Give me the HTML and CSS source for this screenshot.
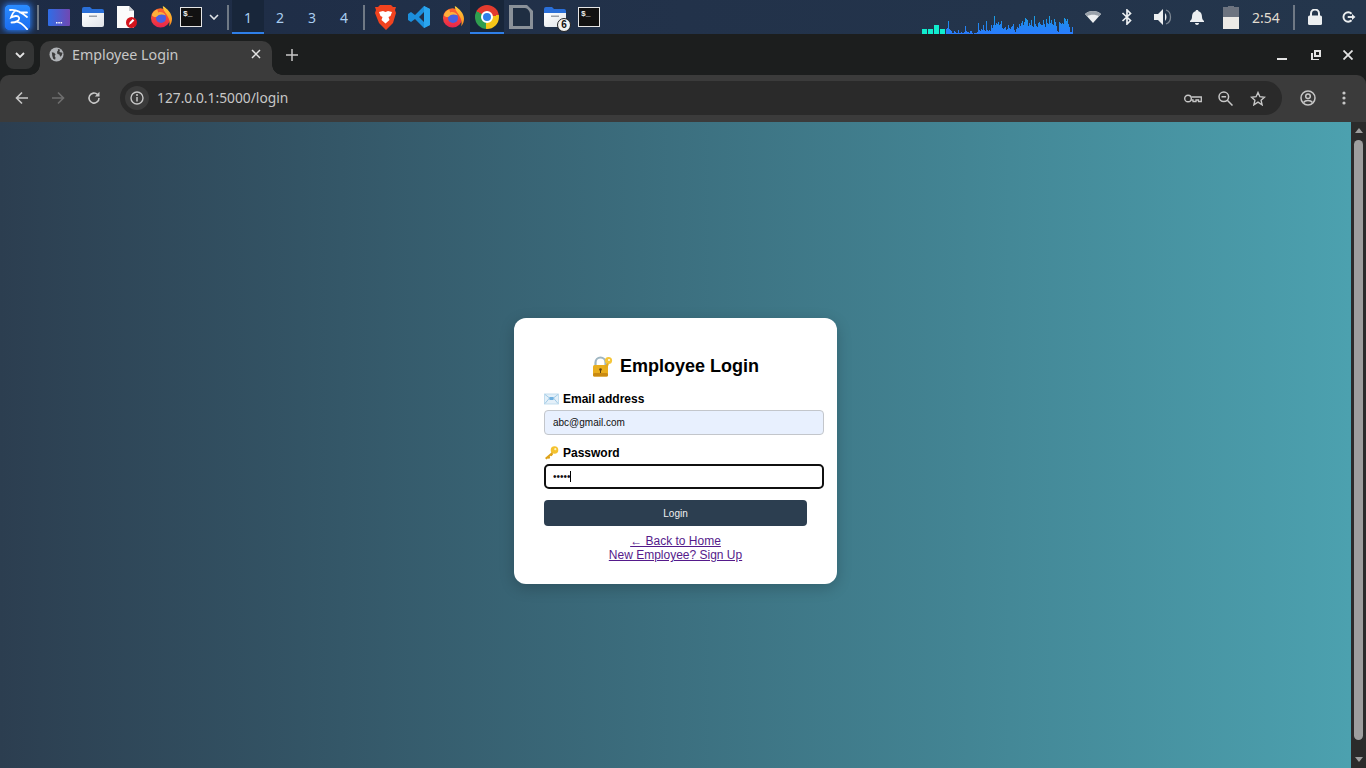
FILE: index.html
```html
<!DOCTYPE html>
<html lang="en">
<head>
<meta charset="utf-8">
<title>Employee Login</title>
<link rel="stylesheet" href="styles.css">
</head>
<body>
<svg class="defs" width="0" height="0" aria-hidden="true">
  <defs>
    <linearGradient id="ffBody" x1="0" y1="0" x2="0" y2="1"><stop offset="0" stop-color="#ff6a2a"/><stop offset="1" stop-color="#e8224e"/></linearGradient>
    <linearGradient id="ffFlame" x1="0" y1="0" x2="0" y2="1"><stop offset="0" stop-color="#ffcf3c"/><stop offset="1" stop-color="#ff8a1e"/></linearGradient>
    <linearGradient id="winGrad" x1="0" y1="0" x2="1" y2="0"><stop offset="0" stop-color="#2f6de6"/><stop offset="1" stop-color="#7148b2"/></linearGradient>
    <linearGradient id="folderGrad" x1="0" y1="0" x2="1" y2="1"><stop offset="0" stop-color="#fff"/><stop offset="1" stop-color="#dfe3e8"/></linearGradient>
    <linearGradient id="kaliGrad" x1="0" y1="0" x2="0" y2="1"><stop offset="0" stop-color="#2b8cff"/><stop offset="1" stop-color="#1a6cf0"/></linearGradient>
    <linearGradient id="barGrad" gradientUnits="userSpaceOnUse" x1="0" y1="0" x2="0" y2="20"><stop offset="0" stop-color="#1aa6dc"/><stop offset=".5" stop-color="#2088f0"/><stop offset="1" stop-color="#2a7cff"/></linearGradient>
    <symbol id="firefox" viewBox="0 0 24 24">
      <circle cx="11.5" cy="13" r="10.5" fill="url(#ffBody)"/>
      <path d="M14 0c5 3 10 8 10 14 0 3-1 6-3 8 1-4 0-8-2-11-1-3-5-6-5-11z" fill="url(#ffFlame)"/>
      <circle cx="12" cy="13" r="5.5" fill="#4a5fe0"/>
      <path d="M2 10c1-4 4-6 6-6l1 3c3-1 6 0 8 3-3-1-6-1-8 0-1 1-2 2-3 2-2 0-3-1-4-2z" fill="#ffb03a"/>
    </symbol>
    <symbol id="folder" viewBox="0 0 22 20">
      <path d="M0 2a2 2 0 0 1 2-2h6l2 2h10a2 2 0 0 1 2 2v4H0z" fill="#2a6fd8"/>
      <path d="M0 6h22v12a2 2 0 0 1-2 2H2a2 2 0 0 1-2-2z" fill="url(#folderGrad)"/>
      <rect x="7" y="8.500" width="8" height="1.500" fill="#9aa0a8"/>
    </symbol>
    <symbol id="globe" viewBox="0 0 16 16">
      <circle cx="8" cy="8" r="7.500" fill="#b0b3b7"/>
      <path d="M3 5.500l2.500.5 1.500 2-1 1.500 1 2-.5 2-2-1-1-3zM9.500 2l2.500 1-1 1.500 1 1 2.500.5-1 3-1.500 1.500-1-2.500-2-.5-.5-2.500 1-1z" fill="#3b3b3b"/>
    </symbol>
  </defs>
</svg>

<header class="taskbar">
  <div class="cell">
    <svg class="kali" width="25" height="25" viewBox="0 0 25 25"><rect width="25" height="25" rx="3" fill="url(#kaliGrad)"/><path d="M5 5c5-1 10 1 17 7M15 7.500h7M11 5.500c-3 1-4 4-5 7 3-1.500 7-2.500 8 0 1 3-3 5-7.500 5M11.700 16.700c4 .5 7 3.500 10.600 7.600" fill="none" stroke="#fff" stroke-width="1.800" stroke-linecap="round"/></svg>
  </div>
  <div class="sep"></div>
  <div class="cell">
    <svg width="22" height="17" viewBox="0 0 22 17"><rect width="22" height="17" rx="1" fill="url(#winGrad)"/><path d="M8 13h1.500v1.500H8zM10.300 13h1.500v1.500h-1.500zM12.600 13h1.500v1.500h-1.500z" fill="#fff"/></svg>
  </div>
  <div class="cell"><svg width="22" height="20"><use href="#folder"/></svg></div>
  <div class="cell">
    <svg width="24" height="24" viewBox="0 0 24 24"><path d="M2 1h12l5 5v17H2z" fill="#fbfbfb"/><path d="M14 1l5 5h-5z" fill="#c9ccd0"/><circle cx="16.500" cy="17.500" r="5.500" fill="#d3141c"/><path d="M13.800 20l1-3 3-3 1.500 1.500-3 3z" fill="#fff"/></svg>
  </div>
  <div class="cell"><svg width="22" height="22"><use href="#firefox"/></svg></div>
  <div class="cell cell-term"><div class="term">$_</div></div>
  <div class="cell cell-chev"><svg width="10" height="6" viewBox="0 0 10 6"><path d="M1 1l4 4 4-4" fill="none" stroke="#dfe3e8" stroke-width="1.600"/></svg></div>
  <div class="sep"></div>
  <nav class="workspaces">
    <span class="ws active">1</span><span class="ws">2</span><span class="ws">3</span><span class="ws">4</span>
  </nav>
  <div class="sep"></div>
  <div class="cell">
    <svg width="21" height="25" viewBox="0 0 21 25"><path d="M5 0h11l2 2 3 0-1 3 1 3-3 10-7 7-7-7L0 8l1-3-1-3 3 0z" fill="#f1431f"/><path d="M4 7l4-1 2.500 1L13 6l4 1-1.500 4-2 1 1 3-4 3.500L6.500 15l1-3-2-1z" fill="#fff"/></svg>
  </div>
  <div class="cell">
    <svg width="22" height="22" viewBox="0 0 22 22"><path d="M16 0l6 3v16l-6 3-9-9-4 3-3-2V8l3-2 4 3zM16 6l-5 5 5 5z" fill="#1c8fdc"/><path d="M16 0l6 3v16l-6 3V16 6z" fill="#2aa5ee"/></svg>
  </div>
  <div class="cell"><svg width="22" height="22"><use href="#firefox"/></svg></div>
  <div class="cell active"><div class="chrome"><div class="chrome-eye"></div></div></div>
  <div class="cell">
    <svg width="24" height="24" viewBox="0 0 24 24"><path d="M0 0h18l6 6v18H0z" fill="#8a9199"/><path d="M4 3h12c2 0 5 3 5 6v12H4z" fill="#1f2e42"/></svg>
  </div>
  <div class="cell cell-badge">
    <svg width="22" height="20"><use href="#folder"/></svg>
    <span class="badge">6</span>
  </div>
  <div class="cell"><div class="term">$_</div></div>

  <div class="tray">
    <div class="graph">
      <svg class="graph-core" width="24" height="10" viewBox="0 0 24 10"><path d="M0 5h5v5H0zM6 5h5v5H6zM12 1h5v9h-5zM18 5h5v5h-5z" fill="#11edce"/></svg>
      <svg width="128" height="20" viewBox="0 0 128 20"><path fill="none" stroke="url(#barGrad)" d="M.5 20v-5m1 5v-6m1 6v-13m1 13v-5m1 5v-4m1 4v-3m1 3v-1m1 1v-1m1 1v-3m1 3v-2m1 2v-1m1 1v-1m1 1v-4m1 4v-1m1 1v-1m1 1v-2m1 2v-1m1 1v-1m1 1v-2m1 2v-8m1 8v-3m1 3v-2m1 2v-2m1 2v-1m1 1v-3m1 3v-3m1 3v-1m2 1v-1m1 1v-1m1 1v-1m1 1v-2m1 2v-11m1 11v-4m1 4v-3m1 3v-5m1 5v-4m1 4v-9m1 9v-4m1 4v-3m1 3v-13m1 13v-4m1 4v-3m1 3v-4m1 4v-3m1 3v-9m1 9v-6m1 6v-9m1 9v-18m1 18v-9m1 9v-11m1 11v-10m1 10v-12m1 12v-9m1 9v-10m1 10v-13m1 13v-6m1 6v-5m1 5v-6m1 6v-7m1 7v-4m1 4v-5m1 5v-9m1 9v-6m1 6v-5m1 5v-7m1 7v-8m1 8v-10m1 10v-4m1 4v-2m1 2v-5m1 5v-7m1 7v-6m1 6v-10m1 10v-8m1 8v-11m1 11v-13m1 13v-9m1 9v-12m1 12v-16m1 16v-15m1 15v-14m1 14v-8m1 8v-11m1 11v-9m1 9v-14m1 14v-8m1 8v-7m1 7v-18m1 18v-10m1 10v-8m1 8v-7m1 7v-11m1 11v-12m1 12v-10m1 10v-9m1 9v-9m1 9v-14m1 14v-10m1 10v-7m1 7v-15m1 15v-11m1 11v-10m1 10v-18m1 18v-11m1 11v-14m1 14v-10m1 10v-9m1 9v-15m1 15v-12m1 12v-8m1 8v-3m1 3v-2m1 2v-12m1 12v-11m1 11v-10m1 10v-11m1 11v-10m1 10v-16m1 16v-15m1 15v-13m1 13v-15m1 15v-10m1 10v-7m1 7v-2m1 2v-2m1 2v-7"/></svg>
    </div>
    <div class="cell">
      <svg width="16" height="12" viewBox="0 0 16 12"><path d="M0 3c4-4 12-4 16 0l-8 9z" fill="#eceff1"/><path d="M0 3c4-4 12-4 16 0l-2 2.300c-3-2-9-2-12 0z" fill="#9aa2ab"/></svg>
    </div>
    <div class="cell">
      <svg width="12" height="16" viewBox="0 0 12 16"><path d="M1.500 4l8 7.500L6 15V1l3.500 3.500-8 7.500" fill="none" stroke="#eceff1" stroke-width="1.700"/></svg>
    </div>
    <div class="cell cell-vol">
      <svg width="18" height="16" viewBox="0 0 18 16"><path d="M0 5h4l5-5v16l-5-5H0z" fill="#eceff1"/><path d="M11 4c2 2 2 6 0 8v-8z" fill="#eceff1"/><path d="M12 1c6 2 6 12 0 14" fill="none" stroke="#7d8793" stroke-width="1.300"/></svg>
    </div>
    <div class="cell">
      <svg width="14" height="15" viewBox="0 0 14 15"><path d="M7 0c1 0 1.500.6 1.500 1.300C11 2 12 4 12 7c0 2 1 3 2 4v1H0v-1c1-1 2-2 2-4 0-3 1-5 3.500-5.700C5.500.6 6 0 7 0zM5 13h4c0 1-1 2-2 2s-2-1-2-2z" fill="#eceff1"/></svg>
    </div>
    <div class="cell cell-batt">
      <svg width="16" height="23" viewBox="0 0 16 23"><path d="M5 0h6v1H5z" fill="#6d7480"/><path d="M0 1h16v10H0z" fill="#6d7480"/><path d="M0 11h16v12H0z" fill="#eceae6"/></svg>
    </div>
    <time class="clock">2:54</time>
    <div class="sep"></div>
    <div class="cell">
      <svg width="14" height="16" viewBox="0 0 14 16"><path d="M3 7V4.500a4 4 0 0 1 8 0V7" fill="none" stroke="#eceff1" stroke-width="2"/><rect y="6.500" width="14" height="9.500" rx="1.500" fill="#eceff1"/></svg>
    </div>
    <div class="cell">
      <svg width="14" height="12" viewBox="0 0 15 14"><path d="M10.500 3.200A5.500 5.500 0 1 0 10.500 10.800" fill="none" stroke="#eceff1" stroke-width="2.200"/><path d="M6 7h6" stroke="#eceff1" stroke-width="2.200"/><path d="M11 3.500L15 7l-4 3.500z" fill="#eceff1"/></svg>
    </div>
  </div>
</header>

<div class="tabstrip">
  <button class="tab-menu"><svg width="10" height="6" viewBox="0 0 10 6"><path d="M1 1l4 4 4-4" fill="none" stroke="#e3e3e3" stroke-width="1.800"/></svg></button>
  <div class="tab">
    <svg class="favicon" width="15" height="15"><use href="#globe"/></svg>
    <span class="tab-title">Employee Login</span>
    <svg class="tab-close" width="10" height="10" viewBox="0 0 10 10"><path d="M1 1l8 8M9 1L1 9" stroke="#e3e3e3" stroke-width="1.500"/></svg>
  </div>
  <svg class="new-tab" width="12" height="12" viewBox="0 0 12 12"><path d="M6 0v12M0 6h12" stroke="#c7c7c7" stroke-width="1.500"/></svg>
  <div class="win-controls">
    <svg width="10" height="10" viewBox="0 0 10 10"><path d="M0 9h10" stroke="#e3e3e3" stroke-width="2"/></svg>
    <svg width="10" height="10" viewBox="0 0 10 10"><path fill-rule="evenodd" d="M3 0h7v7H3zM5 2v3h3V2zM0 3h2v6h6v1H0z" fill="#e3e3e3"/></svg>
    <svg width="10" height="10" viewBox="0 0 10 10"><path d="M.5.500l9 9M9.500.500l-9 9" stroke="#e3e3e3" stroke-width="1.800"/></svg>
  </div>
</div>

<div class="toolbar">
  <div class="nav">
    <svg width="14" height="14" viewBox="0 0 14 14"><path d="M13 7H2M7 1.500L1.500 7 7 12.500" fill="none" stroke="#c7c7c7" stroke-width="1.600"/></svg>
    <svg width="14" height="14" viewBox="0 0 14 14"><path d="M1 7h11M7 1.500L12.500 7 7 12.500" fill="none" stroke="#6e6e6e" stroke-width="1.600"/></svg>
    <svg width="14" height="14" viewBox="0 0 14 14"><path d="M12 7a5 5 0 1 1-1.500-3.500" fill="none" stroke="#c7c7c7" stroke-width="1.600"/><path d="M12.500 .800v4.700H7.800z" fill="#c7c7c7"/></svg>
  </div>
  <div class="omnibox">
    <div class="info-chip"><svg width="14" height="14" viewBox="0 0 14 14"><circle cx="7" cy="7" r="6" fill="none" stroke="#c7c7c7" stroke-width="1.400"/><path d="M7 6v4.500" stroke="#c7c7c7" stroke-width="1.500"/><circle cx="7" cy="4" r="1" fill="#c7c7c7"/></svg></div>
    <span class="url">127.0.0.1:5000/login</span>
    <div class="omni-actions">
      <svg class="key-icon" width="18" height="9" viewBox="0 0 18 9"><circle cx="4" cy="4.500" r="3.300" fill="none" stroke="#c7c7c7" stroke-width="1.400"/><path d="M7.500 3H17.300V7.500H14.500V6H12V7.500H9V6H7.300" fill="none" stroke="#c7c7c7" stroke-width="1.300"/></svg>
      <svg width="15" height="15" viewBox="0 0 15 15"><circle cx="5.800" cy="5.800" r="4.800" fill="none" stroke="#c7c7c7" stroke-width="1.500"/><path d="M9.300 9.300L14.500 14.500M3.500 5.800h4.600" stroke="#c7c7c7" stroke-width="1.500"/></svg>
      <svg width="16" height="15" viewBox="0 0 16 15"><path d="M8 1.500l1.900 4.200 4.600.500-3.400 3.100 1 4.500L8 11.100l-4.100 2.700 1-4.500L1.500 6.200l4.600-.500z" fill="none" stroke="#c7c7c7" stroke-width="1.400"/></svg>
    </div>
  </div>
  <div class="tool-actions">
    <svg width="16" height="16" viewBox="0 0 16 16"><circle cx="8" cy="8" r="7" fill="none" stroke="#c7c7c7" stroke-width="1.500"/><circle cx="8" cy="6.300" r="2.300" fill="none" stroke="#c7c7c7" stroke-width="1.500"/><path d="M3.500 12.500c2-2.700 7-2.700 9 0" fill="none" stroke="#c7c7c7" stroke-width="1.500"/></svg>
    <svg width="4" height="14" viewBox="0 0 4 14"><circle cx="2" cy="2" r="1.600" fill="#c7c7c7"/><circle cx="2" cy="7" r="1.600" fill="#c7c7c7"/><circle cx="2" cy="12" r="1.600" fill="#c7c7c7"/></svg>
  </div>
</div>

<div class="viewport">
  <main class="page">
    <section class="card">
      <h2 class="card-title">
        <svg width="21" height="21" viewBox="0 0 21 21"><path d="M3.500 10V6.500a5 5 0 0 1 10 0V10" fill="none" stroke="#9fb6c2" stroke-width="2.200"/><rect x="1" y="9" width="15" height="11.500" rx="1.500" fill="#e9ae1e"/><rect x="1" y="17" width="15" height="3.500" rx="1.500" fill="#c98a12"/><circle cx="8.500" cy="13.500" r="1.300" fill="#5d4210"/><path d="M8 13.500h1v3.500H8z" fill="#5d4210"/><circle cx="16.500" cy="4.500" r="3.600" fill="#f5c63a"/><circle cx="17" cy="4" r="1" fill="#fff"/><path d="M15 7l-3 4.500 1.600 1 1-1.500 1 .500 1.200-3.500z" fill="#e3a91c"/></svg>
        <span>Employee Login</span>
      </h2>
      <form class="login-form">
        <label class="field-label" for="email">
          <svg width="15" height="12" viewBox="0 0 15 12"><rect x=".5" y="1" width="14" height="10" fill="#e4f0f9" stroke="#b6d6ea" stroke-width=".800"/><path d="M1 1.500l6.500 5 6.500-5M1 10.500l4.500-5.500M14 10.500L9.500 5" fill="none" stroke="#8fc0e0" stroke-width=".800"/><rect x="5.500" y="4" width="4" height="3" fill="#6fb0e0"/></svg>
          <span>Email address</span>
        </label>
        <input class="field field-filled" id="email" type="email" value="abc@gmail.com">
        <label class="field-label label-gap" for="password">
          <svg width="15" height="14" viewBox="0 0 15 14"><circle cx="10.500" cy="4" r="3.800" fill="#f4c22f"/><circle cx="11.300" cy="3.200" r="1.100" fill="#fff3c0"/><path d="M8 6l-7 6 1.500 1.500 1.500-1.300 1 .800 1.200-1.200-.600-1 1-1 1 .500 1.500-2z" fill="#dda21a"/></svg>
          <span>Password</span>
        </label>
        <div class="field-wrap">
          <input class="field field-focus" id="password" type="password" value="abcde">
          <span class="caret"></span>
        </div>
        <button class="submit" type="button">Login</button>
      </form>
      <div class="links">
        <a href="#home">← Back to Home</a>
        <a href="#signup">New Employee? Sign Up</a>
      </div>
    </section>
  </main>
  <aside class="scrollbar">
    <span class="arrow-up"></span>
    <span class="thumb"></span>
    <span class="arrow-down"></span>
  </aside>
</div>
</body>
</html>
```

FILE: styles.css
```css
* { box-sizing: border-box; }
html, body { margin: 0; height: 100%; }
body {
  width: 1366px;
  height: 768px;
  overflow: hidden;
  display: flex;
  flex-direction: column;
  font-family: "Liberation Sans", Arial, sans-serif;
  background: #1c1e1e;
}
.defs { position: absolute; }
svg { display: block; flex: none; }

/* Desktop panel */
.taskbar {
  height: 34px;
  flex: none;
  display: flex;
  align-items: stretch;
  background: linear-gradient(90deg, #1d2b45, #22324a 50%, #24364c);
}
.cell {
  width: 34px;
  flex: none;
  display: flex;
  align-items: center;
  justify-content: center;
}
.cell.active { background: #18263a; box-shadow: inset 0 -2px 0 #2f7fe8; }
.cell-term { width: 26px; }
.cell-chev { width: 20px; }
.cell-vol { width: 36px; padding-left: 2px; }
.cell-batt { width: 32px; padding-left: 2px; }
.cell-badge { position: relative; }
.sep { width: 8px; flex: none; display: flex; justify-content: center; padding: 5px 0 4px; }
.sep::before { content: ""; width: 2px; background: #6f7985; }
.kali { box-shadow: 0 0 6px 1px #2a80ff; border-radius: 3px; }
.term {
  width: 22px;
  height: 20px;
  border: 1px solid #e6e6e6;
  background: #111;
  color: #eee;
  font: bold 8px/10px "Liberation Mono", monospace;
  padding: 1px 0 0 2px;
}
.badge {
  position: absolute;
  left: 19px;
  top: 18px;
  width: 14px;
  height: 14px;
  border-radius: 50%;
  background: #f2f2f2;
  border: 1px solid #222;
  color: #111;
  font: bold 10px/12px "Liberation Sans", sans-serif;
  text-align: center;
}
.chrome {
  width: 24px;
  height: 24px;
  border-radius: 50%;
  background: conic-gradient(from 300deg, #e33b2e 0 140deg, #f5c518 140deg 245deg, #2f9e4f 245deg 360deg);
  display: flex;
  align-items: center;
  justify-content: center;
}
.chrome-eye { width: 12px; height: 12px; border-radius: 50%; background: #2f7fe8; border: 2px solid #fff; }
.workspaces { display: flex; }
.ws {
  width: 32px;
  display: flex;
  align-items: center;
  justify-content: center;
  font: 14px "Noto Sans", sans-serif;
  color: #a9cdf0;
}
.ws.active { background: #18263a; box-shadow: inset 0 -2px 0 #2f7fe8; }
.tray { margin-left: auto; display: flex; align-items: stretch; }
.graph { display: flex; align-items: flex-end; width: 152px; margin-right: 2px; }
.clock {
  width: 44px;
  display: flex;
  align-items: center;
  padding-left: 6px;
  font: 14px "Noto Sans", sans-serif;
  color: #e0dccf;
}

/* Browser tab strip */
.tabstrip {
  height: 41px;
  flex: none;
  display: flex;
  align-items: flex-end;
  padding-left: 6px;
  background: #1c1e1e;
  position: relative;
}
.tab-menu {
  width: 28px;
  height: 28px;
  align-self: flex-start;
  margin-top: 7px;
  border: 0;
  padding: 0;
  border-radius: 8px;
  background: #343535;
  display: flex;
  align-items: center;
  justify-content: center;
}
.tab {
  width: 232px;
  height: 34px;
  margin-left: 6px;
  display: flex;
  align-items: center;
  padding: 0 11px 8px 9px;
  background: #3b3b3b;
  border-radius: 10px 10px 0 0;
  position: relative;
}
.tab::before, .tab::after {
  content: "";
  position: absolute;
  bottom: 0;
  width: 10px;
  height: 10px;
}
.tab::before { left: -10px; background: radial-gradient(circle at 0 0, transparent 9.500px, #3b3b3b 10px); }
.tab::after { right: -10px; background: radial-gradient(circle at 100% 0, transparent 9.500px, #3b3b3b 10px); }
.tab-title {
  margin-left: 8px;
  flex: 1;
  font: 14.250px "Noto Sans", sans-serif;
  color: #c7c7c7;
}
.new-tab { align-self: flex-start; margin: 15px 0 0 14px; }
.win-controls {
  position: absolute;
  right: 13px;
  top: 16px;
  display: flex;
  gap: 22px;
}
.win-controls svg:first-child { margin-right: 1px; transform: translateX(-1px); }

/* Browser toolbar */
.toolbar {
  height: 47px;
  flex: none;
  display: flex;
  align-items: center;
  background: #3b3b3b;
  border-radius: 9px 9px 0 0;
  padding-bottom: 1px;
}
.nav { width: 120px; flex: none; display: flex; gap: 22px; padding-left: 15px; }
.omnibox {
  width: 1162px;
  height: 34px;
  flex: none;
  display: flex;
  align-items: center;
  padding: 0 16px 0 5px;
  border-radius: 17px;
  background: #2a2a2a;
}
.info-chip {
  width: 24px;
  height: 24px;
  border-radius: 50%;
  background: #3b3b3b;
  display: flex;
  align-items: center;
  justify-content: center;
}
.url {
  margin: 0 0 2px 8px;
  flex: 1;
  font: 13.800px "Noto Sans", sans-serif;
  color: #c7c7c7;
}
.omni-actions { display: flex; align-items: center; gap: 17px; }
.key-icon { margin-right: -1px; }
.tool-actions { flex: 1; display: flex; align-items: center; gap: 26px; padding-left: 18px; }

/* Page viewport */
.viewport { flex: 1; min-height: 0; display: flex; }
.page {
  flex: 1;
  display: flex;
  align-items: center;
  justify-content: center;
  padding-top: 12px;
  background: linear-gradient(90deg, #2c3e50, #4ca1af);
}
.card {
  width: 323px;
  height: 266px;
  padding: 36px 30px 0;
  border-radius: 12px;
  background: #fff;
  box-shadow: 0 4px 15px rgba(0, 0, 0, .2);
  text-align: center;
}
.card-title {
  margin: 0 0 14px;
  height: 24px;
  display: flex;
  align-items: center;
  justify-content: center;
  gap: 7px;
  font-size: 18px;
  line-height: 24px;
  font-weight: bold;
  color: #000;
}
.login-form { display: block; }
.field-label {
  display: flex;
  align-items: center;
  gap: 4px;
  height: 14px;
  margin-bottom: 4px;
  font-size: 12px;
  font-weight: bold;
  color: #000;
}
.label-gap { margin-top: 11px; }
.field {
  display: block;
  width: 280px;
  height: 25px;
  margin: 0;
  padding: 0 8px;
  border: 1px solid #c3c6cb;
  border-radius: 4px;
  font: 10px "Liberation Sans", Arial, sans-serif;
  color: #111;
  background: #fff;
}
.field-filled { background: #e8f0fe; }
.field-focus { border: 2px solid #101010; border-radius: 5px; padding: 0 7px; outline: none; }
.field-wrap { position: relative; width: 280px; }
.caret {
  position: absolute;
  left: 26px;
  top: 7px;
  width: 1px;
  height: 11px;
  background: #000;
}
.submit {
  display: block;
  width: 263px;
  height: 26px;
  margin-top: 11px;
  border: 0;
  border-radius: 4px;
  background: #2c3e50;
  color: #f0f0f0;
  font: 10px "Liberation Sans", Arial, sans-serif;
}
.links { margin-top: 8px; display: flex; flex-direction: column; align-items: center; }
.links a {
  font-size: 12px;
  line-height: 14px;
  color: #551a8b;
  text-decoration: underline;
}

/* Scrollbar */
.scrollbar {
  width: 15px;
  flex: none;
  display: flex;
  flex-direction: column;
  align-items: center;
  padding-top: 6px;
  background: #2b2b2b;
}
.arrow-up, .arrow-down { width: 0; height: 0; border-left: 4.500px solid transparent; border-right: 4.500px solid transparent; }
.arrow-up { border-bottom: 5px solid #9e9e9e; }
.arrow-down { border-top: 5px solid #9e9e9e; margin-top: 17px; }
.thumb { width: 9px; height: 600px; margin-top: 7px; border-radius: 5px; background: #9e9e9e; }
```
